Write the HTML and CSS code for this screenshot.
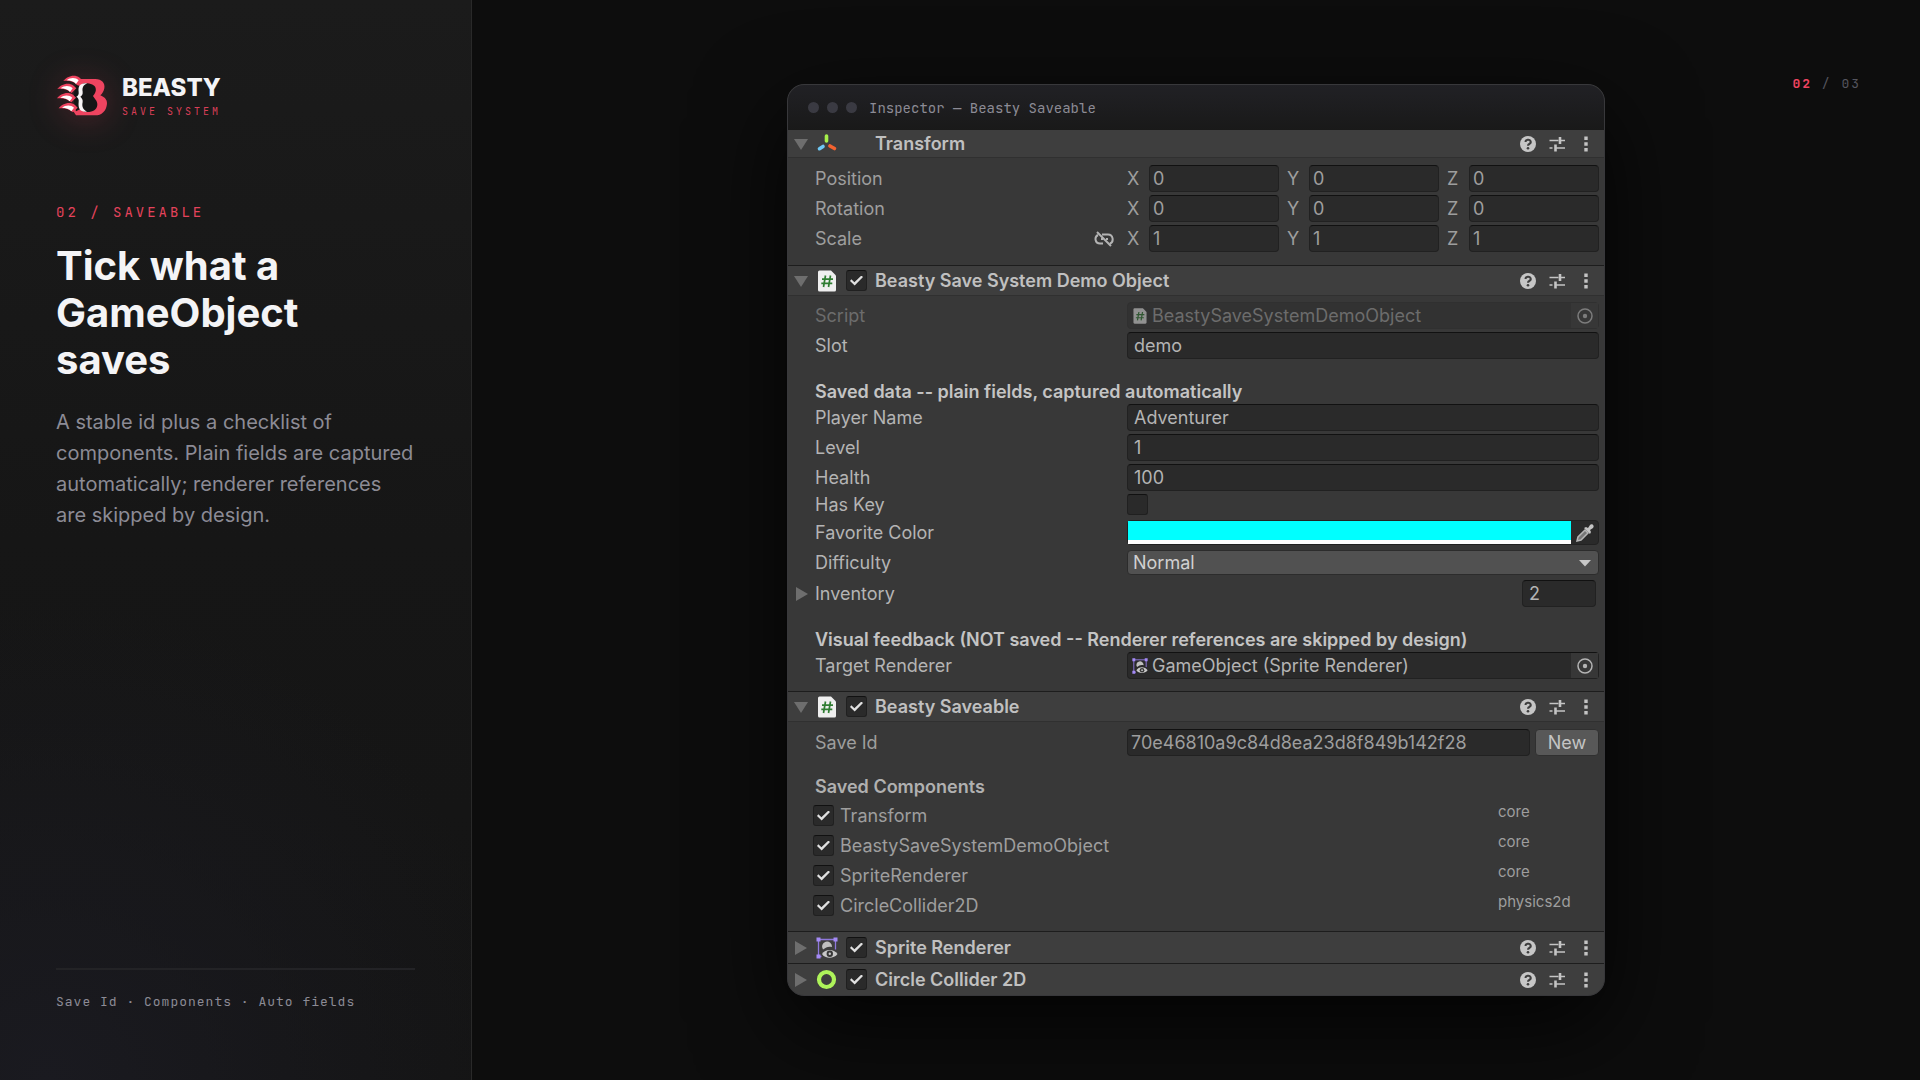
FILE: index.html
```html
<!DOCTYPE html>
<html lang="en">

    <head>
        <meta charset="UTF-8">
        <title>Beasty Save System - Saveable</title>
        <link rel="stylesheet" href="styles.css">
    </head>

    <body>
        <!-- shared icons -->
        <svg class="sprites" width="0" height="0" aria-hidden="true">
            <symbol id="down" viewBox="0 0 14 14"><path d="M0 2h14L7 13z" fill="#6e6e6e"/></symbol>
            <symbol id="right" viewBox="0 0 14 14"><path d="M1 0v14l12-7z" fill="#6e6e6e"/></symbol>
            <symbol id="help" viewBox="0 0 22 22">
                <circle cx="11" cy="11" r="8" fill="#c6c6c6"/>
                <path d="M8.500 9a2.600 2.300 0 1 1 3.800 2c-1 .5-1.300.8-1.300 1.700" fill="none" stroke="#3e3e3e" stroke-width="2"/>
                <circle cx="11" cy="15.300" r="1.300" fill="#3e3e3e"/>
            </symbol>
            <symbol id="presets" viewBox="0 0 22 22">
                <path d="M3.500 7.500h9M15 7.500h4M3.500 15h3M9 15h10" stroke="#c4c4c4" stroke-width="1.700"/>
                <path d="M14 4v7M9.500 11.500v7" stroke="#c4c4c4" stroke-width="2.600"/>
            </symbol>
            <symbol id="more" viewBox="0 0 22 22"><path d="M9.300 3.500h3.400v3.400H9.300zM9.300 9.300h3.400v3.400H9.300zM9.300 15.100h3.400v3.400H9.300z" fill="#c4c4c4"/></symbol>
            <symbol id="script" viewBox="0 0 22 22">
                <path d="M2 2a1.500 1.500 0 0 1 1.500-1.500H15l5 5V20a1.500 1.500 0 0 1-1.500 1.500h-15A1.500 1.500 0 0 1 2 20z" fill="#efefef"/>
                <path d="M9.500 5.500 7.500 17M14.500 5.500l-2 11.500M6 9.200h11M5.300 13.400h11" stroke="#2f7d32" stroke-width="1.700"/>
            </symbol>
            <symbol id="sprite" viewBox="0 0 22 22">
                <path d="M2.500 19.500v-17h17v10M2.500 19.500h3" fill="none" stroke="#8f78dc" stroke-width="1.300"/>
                <path d="M.5.500h4v4h-4zM17.500.500h4v4h-4zM.5 17.500h4v4h-4z" fill="#a48af5"/>
                <path d="M7 12.500a5 5 0 1 1 9-2.500c-4-1-6 .5-9 2.500z" fill="#c0c0c0"/>
                <path d="M6 17c3-5.500 12-5.500 15.500 0-3.500 5-12.500 5-15.500 0z" fill="#c8c8c8"/>
                <circle cx="13.800" cy="16.800" r="3.200" fill="#383838"/>
                <circle cx="13.800" cy="16.800" r="1.200" fill="#c8c8c8"/>
            </symbol>
            <symbol id="target" viewBox="0 0 18 18">
                <circle cx="9" cy="9" r="7" fill="none" stroke="currentColor" stroke-width="1.500"/>
                <circle cx="9" cy="9" r="2.200" fill="currentColor"/>
            </symbol>
        </svg>

        <div class="page">
            <aside class="sidebar">
                <div class="brand">
                    <svg class="brand-mark" viewBox="48 30 156 156" aria-hidden="true">
                        <defs>
                            <g id="claw">
                                <path d="M70 63c10-13 32-22 49-10l8 8-14 14c-10-9-25-14-43-12z" fill="#ef4460"/>
                                <path d="M80 61c11-9 27-9 36 0l-8 11c-6-7-16-11-28-11z" fill="#fff"/>
                            </g>
                        </defs>
                        <path d="M108 57h58c20 0 30 13 27 28-2 10-6 16-12 21 12 5 21 13 20 25-2 22-16 35-36 35h-57l-9-14 14-42z" fill="#ef4460"/>
                        <path d="M132 70c-15 5-13 20-13 29 0 6-5 8-8 11 4 4 8 7 8 13 0 14 2 26 17 33h12c17-2 24-11 24-23 0-11-8-16-13-25 7-8 10-15 8-23-2-11-18-16-35-15z" fill="#161616"/>
                        <path d="M108 74c-8 20-8 60 0 80l12-6V78z" fill="#161616"/>
                        <path d="M142 70c-24-2-28 10-26 26 1 8-2 11-7 14 6 4 8 8 7 16-2 18 3 31 25 29-13-7-16-16-13-29 1-8-3-12-7-16 4-3 8-6 7-15-2-12 2-20 14-25z" fill="#f7f4f5"/>
                        <use href="#claw"/>
                        <use href="#claw" x="-18" y="24"/>
                        <use href="#claw" x="-19" y="52"/>
                        <use href="#claw" x="-14" y="82"/>
                    </svg>
                    <div class="brand-text">
                        <div class="brand-name">BEASTY</div>
                        <div class="brand-sub">SAVE SYSTEM</div>
                    </div>
                </div>

                <p class="eyebrow">02 / SAVEABLE</p>
                <h1>Tick what a GameObject saves</h1>
                <p class="intro">A stable id plus a checklist of components. Plain fields are captured automatically; renderer references are skipped by design.</p>

                <footer>Save Id · Components · Auto fields</footer>
            </aside>

            <main>
                <section class="window">
                    <header class="titlebar">
                        <i class="dot"></i><i class="dot"></i><i class="dot"></i>
                        <span class="title">Inspector — Beasty Saveable</span>
                    </header>

                    <!-- Transform -->
                    <div class="component">
                        <div class="head">
                            <button class="icon-button" aria-label="Collapse"><svg class="arrow"><use href="#down"/></svg></button>
                            <svg class="kind" viewBox="0 0 22 22" fill="none" stroke-width="3.600" stroke-linecap="round">
                                <path d="M10.500 3v5" stroke="#a6f04b"/>
                                <path d="M7 13.500l-3.500 2.200" stroke="#6fc8f5"/>
                                <path d="M14 13l4.500 2.500" stroke="#f4622f"/>
                            </svg>
                            <h2>Transform</h2>
                            <div class="tools">
                                <button class="icon-button" aria-label="Help"><svg><use href="#help"/></svg></button>
                                <button class="icon-button" aria-label="Presets"><svg><use href="#presets"/></svg></button>
                                <button class="icon-button" aria-label="More"><svg><use href="#more"/></svg></button>
                            </div>
                        </div>
                        <div class="fields dim">
                            <div class="row">
                                <span class="label">Position</span>
                                <div class="vector">
                                    <label>X <input type="text" value="0"></label>
                                    <label>Y <input type="text" value="0"></label>
                                    <label>Z <input type="text" value="0"></label>
                                </div>
                            </div>
                            <div class="row">
                                <span class="label">Rotation</span>
                                <div class="vector">
                                    <label>X <input type="text" value="0"></label>
                                    <label>Y <input type="text" value="0"></label>
                                    <label>Z <input type="text" value="0"></label>
                                </div>
                            </div>
                            <div class="row">
                                <span class="label">Scale
                                    <button class="icon-button link-button" aria-label="Constrain proportions">
                                        <svg viewBox="0 0 20 18" fill="none" stroke="#b4b4b4" stroke-width="2">
                                            <path d="M4 5C0 7 1 13.500 6 13.500h3M8 4.500h6c5.500 0 6 7.500 2 9M7 9h2M12 9h2M3 2l14 14"/>
                                        </svg>
                                    </button>
                                </span>
                                <div class="vector">
                                    <label>X <input type="text" value="1"></label>
                                    <label>Y <input type="text" value="1"></label>
                                    <label>Z <input type="text" value="1"></label>
                                </div>
                            </div>
                        </div>
                    </div>

                    <!-- Demo object -->
                    <div class="component">
                        <div class="head">
                            <button class="icon-button" aria-label="Collapse"><svg class="arrow"><use href="#down"/></svg></button>
                            <svg class="kind"><use href="#script"/></svg>
                            <input type="checkbox" id="demo-on" checked>
                            <h2><label for="demo-on">Beasty Save System Demo Object</label></h2>
                            <div class="tools">
                                <button class="icon-button" aria-label="Help"><svg><use href="#help"/></svg></button>
                                <button class="icon-button" aria-label="Presets"><svg><use href="#presets"/></svg></button>
                                <button class="icon-button" aria-label="More"><svg><use href="#more"/></svg></button>
                            </div>
                        </div>
                        <div class="fields">
                            <div class="row disabled">
                                <label for="script-ref">Script</label>
                                <div class="object">
                                    <svg class="object-icon"><use href="#script"/></svg>
                                    <input type="text" id="script-ref" value="BeastySaveSystemDemoObject" disabled>
                                    <button class="icon-button pick" aria-label="Pick script" disabled><svg><use href="#target"/></svg></button>
                                </div>
                            </div>
                            <div class="row">
                                <label for="slot">Slot</label>
                                <input type="text" id="slot" value="demo">
                            </div>
                            <h3>Saved data -- plain fields, captured automatically</h3>
                            <div class="row">
                                <label for="player">Player Name</label>
                                <input type="text" id="player" value="Adventurer">
                            </div>
                            <div class="row">
                                <label for="level">Level</label>
                                <input type="text" id="level" value="1">
                            </div>
                            <div class="row">
                                <label for="health">Health</label>
                                <input type="text" id="health" value="100">
                            </div>
                            <div class="row short">
                                <label for="key">Has Key</label>
                                <input type="checkbox" id="key">
                            </div>
                            <div class="row spaced">
                                <label for="color">Favorite Color</label>
                                <div class="color">
                                    <input type="color" id="color" value="#00ffff">
                                    <button class="icon-button" aria-label="Pick color">
                                        <svg viewBox="0 0 20 20">
                                            <path d="M2 18l1-4 7-7 3 3-7 7z" fill="#777" stroke="#b5b5b5" stroke-width="1.500"/>
                                            <path d="M9 5l2-1 2 1 2-3c2-2 5 1 3 3l-3 2 1 2-1 2z" fill="#c4c4c4"/>
                                        </svg>
                                    </button>
                                </div>
                            </div>
                            <div class="row spaced">
                                <label for="difficulty">Difficulty</label>
                                <div class="popup">
                                    <select id="difficulty">
                                        <option>Normal</option>
                                    </select>
                                    <svg viewBox="0 0 12 8"><path d="M0 1h12L6 7.500z" fill="#c8c8c8"/></svg>
                                </div>
                            </div>
                            <div class="row spaced foldout">
                                <button class="icon-button" aria-label="Expand"><svg class="arrow"><use href="#right"/></svg></button>
                                <label for="inventory">Inventory</label>
                                <input type="text" id="inventory" value="2">
                            </div>
                            <h3>Visual feedback (NOT saved -- Renderer references are skipped by design)</h3>
                            <div class="row">
                                <label for="renderer">Target Renderer</label>
                                <div class="object">
                                    <svg class="object-icon"><use href="#sprite"/></svg>
                                    <input type="text" id="renderer" value="GameObject (Sprite Renderer)">
                                    <button class="icon-button pick" aria-label="Pick renderer"><svg><use href="#target"/></svg></button>
                                </div>
                            </div>
                        </div>
                    </div>

                    <!-- Saveable -->
                    <div class="component">
                        <div class="head">
                            <button class="icon-button" aria-label="Collapse"><svg class="arrow"><use href="#down"/></svg></button>
                            <svg class="kind"><use href="#script"/></svg>
                            <input type="checkbox" id="saveable-on" checked>
                            <h2><label for="saveable-on">Beasty Saveable</label></h2>
                            <div class="tools">
                                <button class="icon-button" aria-label="Help"><svg><use href="#help"/></svg></button>
                                <button class="icon-button" aria-label="Presets"><svg><use href="#presets"/></svg></button>
                                <button class="icon-button" aria-label="More"><svg><use href="#more"/></svg></button>
                            </div>
                        </div>
                        <div class="fields dim">
                            <div class="row">
                                <label for="save-id">Save Id</label>
                                <div class="save-id">
                                    <input type="text" id="save-id" value="70e46810a9c84d8ea23d8f849b142f28">
                                    <button class="new">New</button>
                                </div>
                            </div>
                            <h3>Saved Components</h3>
                            <ul class="saved">
                                <li><label><input type="checkbox" checked> Transform</label><span class="tag">core</span></li>
                                <li><label><input type="checkbox" checked> BeastySaveSystemDemoObject</label><span class="tag">core</span></li>
                                <li><label><input type="checkbox" checked> SpriteRenderer</label><span class="tag">core</span></li>
                                <li><label><input type="checkbox" checked> CircleCollider2D</label><span class="tag">physics2d</span></li>
                            </ul>
                        </div>
                    </div>

                    <!-- collapsed components -->
                    <div class="component closed">
                        <div class="head">
                            <button class="icon-button" aria-label="Expand"><svg class="arrow"><use href="#right"/></svg></button>
                            <svg class="kind"><use href="#sprite"/></svg>
                            <input type="checkbox" id="sprite-on" checked>
                            <h2><label for="sprite-on">Sprite Renderer</label></h2>
                            <div class="tools">
                                <button class="icon-button" aria-label="Help"><svg><use href="#help"/></svg></button>
                                <button class="icon-button" aria-label="Presets"><svg><use href="#presets"/></svg></button>
                                <button class="icon-button" aria-label="More"><svg><use href="#more"/></svg></button>
                            </div>
                        </div>
                    </div>
                    <div class="component closed">
                        <div class="head">
                            <button class="icon-button" aria-label="Expand"><svg class="arrow"><use href="#right"/></svg></button>
                            <svg class="kind" viewBox="0 0 22 22"><circle cx="10.500" cy="10.500" r="7.500" fill="none" stroke="#aef35a" stroke-width="4.200"/></svg>
                            <input type="checkbox" id="collider-on" checked>
                            <h2><label for="collider-on">Circle Collider 2D</label></h2>
                            <div class="tools">
                                <button class="icon-button" aria-label="Help"><svg><use href="#help"/></svg></button>
                                <button class="icon-button" aria-label="Presets"><svg><use href="#presets"/></svg></button>
                                <button class="icon-button" aria-label="More"><svg><use href="#more"/></svg></button>
                            </div>
                        </div>
                    </div>
                </section>

                <p class="pager"><b>02</b> / 03</p>
            </main>
        </div>
    </body>
</html>
```

FILE: styles.css
```css
* {
    box-sizing: border-box;
}

body {
    margin: 0;
    background-color: #0d0d0d;
    color: #f4f4f6;
    font-family: Inter, "Liberation Sans", sans-serif;
}

h1, h2, h3, p, ul {
    margin: 0;
    padding: 0;
}

input, select, button {
    font: inherit;
    color: inherit;
    margin: 0;
}

.sprites {
    display: none;
}

.page {
    display: grid;
    grid-template-columns: 472px 1fr;
    min-height: 100vh;
}

/* sidebar */
.sidebar {
    display: flex;
    flex-direction: column;
    padding: 70px 56px 68px;
    border-right: 1px solid #292929;
    background: radial-gradient(circle at 10% 100%, #1a1a20 0, rgba(26, 26, 32, 0) 480px), linear-gradient(#1b1b1b, #161616 50%, #141414);
}

.brand {
    display: flex;
    align-items: center;
    gap: 14px;
    margin-bottom: 80px;
}

.brand-mark {
    width: 52px;
    height: 52px;
    filter: drop-shadow(0 4px 16px rgba(239, 68, 96, 0.25));
}

.brand-text {
    padding-top: 2px;
}

.brand-name {
    font-size: 24px;
    font-weight: 800;
    line-height: 28px;
}

.brand-sub, .eyebrow, footer, .title, .pager {
    font-family: "JetBrains Mono", "DejaVu Sans Mono", monospace;
}

.brand-sub {
    margin-top: 2px;
    color: #d93f58;
    font-size: 10px;
    letter-spacing: 3px;
    line-height: 16px;
}

.eyebrow {
    color: #e5435c;
    font-size: 14px;
    letter-spacing: 3px;
    line-height: 20px;
}

h1 {
    margin-top: 20px;
    font-size: 40px;
    font-weight: 700;
    line-height: 47px;
}

.intro {
    margin-top: 24px;
    color: #8c8b95;
    font-size: 20px;
    line-height: 31px;
}

footer {
    margin-top: auto;
    padding-top: 22px;
    border-top: 2px solid #232326;
    color: #8c8b95;
    font-size: 13px;
    letter-spacing: 1px;
    line-height: 20px;
}

/* stage */
main {
    display: grid;
    grid-template-columns: 1fr minmax(0, 818px) 1fr;
    padding: 0 56px;
}

.pager {
    grid-column: 3;
    grid-row: 1;
    justify-self: end;
    padding: 74px 3px 0 0;
    color: #55555e;
    font-size: 13px;
    letter-spacing: 2px;
    line-height: 20px;
}

.pager b {
    color: #ef4460;
}

.window {
    grid-column: 2;
    grid-row: 1;
    align-self: center;
    overflow: hidden;
    border: 1px solid #38383b;
    border-radius: 17px;
    background-color: #383838;
    box-shadow: 0 30px 90px rgba(0, 0, 0, 0.8);
    color: #b4b4b4;
    font-size: 18px;
}

.titlebar {
    display: flex;
    align-items: center;
    gap: 8px;
    height: 45px;
    padding: 0 20px;
    background: linear-gradient(#212125, #191919);
}

.dot {
    width: 11px;
    height: 11px;
    border-radius: 50%;
    background-color: #3a3a42;
}

.title {
    margin-left: 4px;
    color: #8c8b95;
    font-size: 14px;
}

.head {
    display: grid;
    grid-template-columns: 14px 22px 21px 1fr auto;
    gap: 8px;
    align-items: center;
    height: 30px;
    padding: 0 7px 0 6px;
    border-bottom: 1px solid #303030;
    background-color: #3e3e3e;
}

.component + .component {
    border-top: 1px solid #1d1d1d;
}

.component:nth-of-type(1) .head {
    height: 28px;
}

.closed .head {
    height: 31px;
    border-bottom: 0;
}

.kind {
    width: 22px;
    height: 22px;
}

.arrow {
    width: 14px;
    height: 14px;
}

h2 {
    grid-column: 4;
    color: #c0c0c0;
    font-size: 18px;
    font-weight: 600;
    line-height: 24px;
}

.tools {
    display: flex;
    gap: 7px;
}

.tools svg {
    width: 22px;
    height: 22px;
}

.icon-button {
    display: grid;
    place-items: center;
    padding: 0;
    border: 0;
    background: none;
}

/* fields */
.fields {
    padding: 6px 5px 12px 27px;
}

.fields.dim {
    padding-top: 7px;
    color: #9e9e9e;
}

.component:nth-of-type(1) .fields {
    padding-bottom: 13px;
}

.row {
    display: grid;
    grid-template-columns: 312px 1fr;
    align-items: center;
    height: 27px;
}

.row + .row {
    margin-top: 3px;
}

.row.short {
    height: 21px;
}

.row.spaced {
    margin-top: 5px;
    height: 25px;
}

.row.foldout {
    grid-template-columns: 20px 1fr 74px;
    height: 27px;
    margin-left: -20px;
    padding-right: 3px;
}

.foldout .icon-button {
    justify-self: start;
}

h3 {
    margin-top: 21px;
    color: #c4c4c4;
    font-size: 18px;
    font-weight: 600;
    line-height: 24px;
}

.dim h3 {
    margin-top: 19px;
    color: #b0b0b0;
}

.label {
    display: flex;
    justify-content: space-between;
}

.link-button {
    margin-right: 13px;
}

.link-button svg {
    width: 20px;
    height: 18px;
}

input[type="text"], .object, .color {
    width: 100%;
    min-width: 0;
    height: 27px;
    padding: 0 6px;
    border: 1px solid #212121;
    border-top-color: #111;
    border-radius: 4px;
    background-color: #2a2a2a;
}

.vector {
    display: grid;
    grid-template-columns: repeat(3, 1fr);
    gap: 8px;
}

.vector label {
    display: grid;
    grid-template-columns: 22px 1fr;
    align-items: center;
}

.vector input[type="text"], .save-id input[type="text"] {
    padding: 0 3px;
}

.object {
    display: grid;
    grid-template-columns: 16px 1fr 27px;
    gap: 4px;
    align-items: center;
    padding: 0 0 0 4px;
}

.object input[type="text"] {
    height: 25px;
    padding: 0;
    border: 0;
    background: none;
}

.object-icon {
    width: 16px;
    height: 16px;
}

.pick {
    height: 25px;
    background-color: #373737;
}

.pick svg {
    width: 18px;
    height: 18px;
}

.disabled {
    color: #6c6c6c;
}

.disabled .object {
    border-color: #303030;
    background-color: #323232;
}

.disabled .object-icon {
    opacity: 0.5;
}

.disabled .pick {
    color: #7c7c7c;
}

input[type="checkbox"] {
    display: grid;
    place-items: center;
    appearance: none;
    width: 21px;
    height: 21px;
    border: 1px solid #202020;
    border-top-color: #111;
    border-radius: 3px;
    background-color: #2a2a2a;
}

input[type="checkbox"]:checked::before {
    content: "";
    width: 13px;
    height: 10px;
    background-color: #e0e0e0;
    clip-path: polygon(0 54%, 10% 38%, 34% 68%, 88% 0, 100% 14%, 36% 100%);
}

.color {
    display: grid;
    grid-template-columns: 1fr 27px;
    height: 25px;
    padding: 0;
    border-color: #222;
}

.color input {
    appearance: none;
    width: 100%;
    height: 23px;
    padding: 0;
    border: 0;
    border-bottom: 4px solid #fff;
    background: none;
}

.color input::-webkit-color-swatch-wrapper {
    padding: 0;
}

.color input::-webkit-color-swatch {
    border: 0;
    border-radius: 0;
}

.color svg {
    width: 20px;
    height: 20px;
}

.popup {
    display: grid;
    grid-template-columns: 1fr 28px;
    align-items: center;
}

.popup select {
    grid-area: 1 / 1 / 2 / 3;
    appearance: none;
    height: 25px;
    padding: 0 5px;
    border: 1px solid #2c2c2c;
    border-radius: 4px;
    background-color: #515151;
    color: #d0d0d0;
}

.popup svg {
    grid-area: 1 / 2;
    justify-self: center;
    width: 12px;
    height: 8px;
    pointer-events: none;
}

.save-id {
    display: grid;
    grid-template-columns: 1fr 64px;
    gap: 5px;
}

.new {
    height: 27px;
    padding: 0;
    border: 1px solid #303030;
    border-radius: 4px;
    background-color: #585858;
    color: #c4c4c4;
}

.saved {
    margin-top: 3px;
    margin-left: -2px;
    list-style: none;
}

.saved li {
    display: grid;
    grid-template-columns: 1fr 101px;
    height: 27px;
    margin-bottom: 3px;
}

.saved li:last-child {
    margin-bottom: 0;
}

.saved label {
    display: flex;
    align-items: center;
    gap: 6px;
}

.tag {
    font-size: 15px;
    line-height: 20px;
}
```
